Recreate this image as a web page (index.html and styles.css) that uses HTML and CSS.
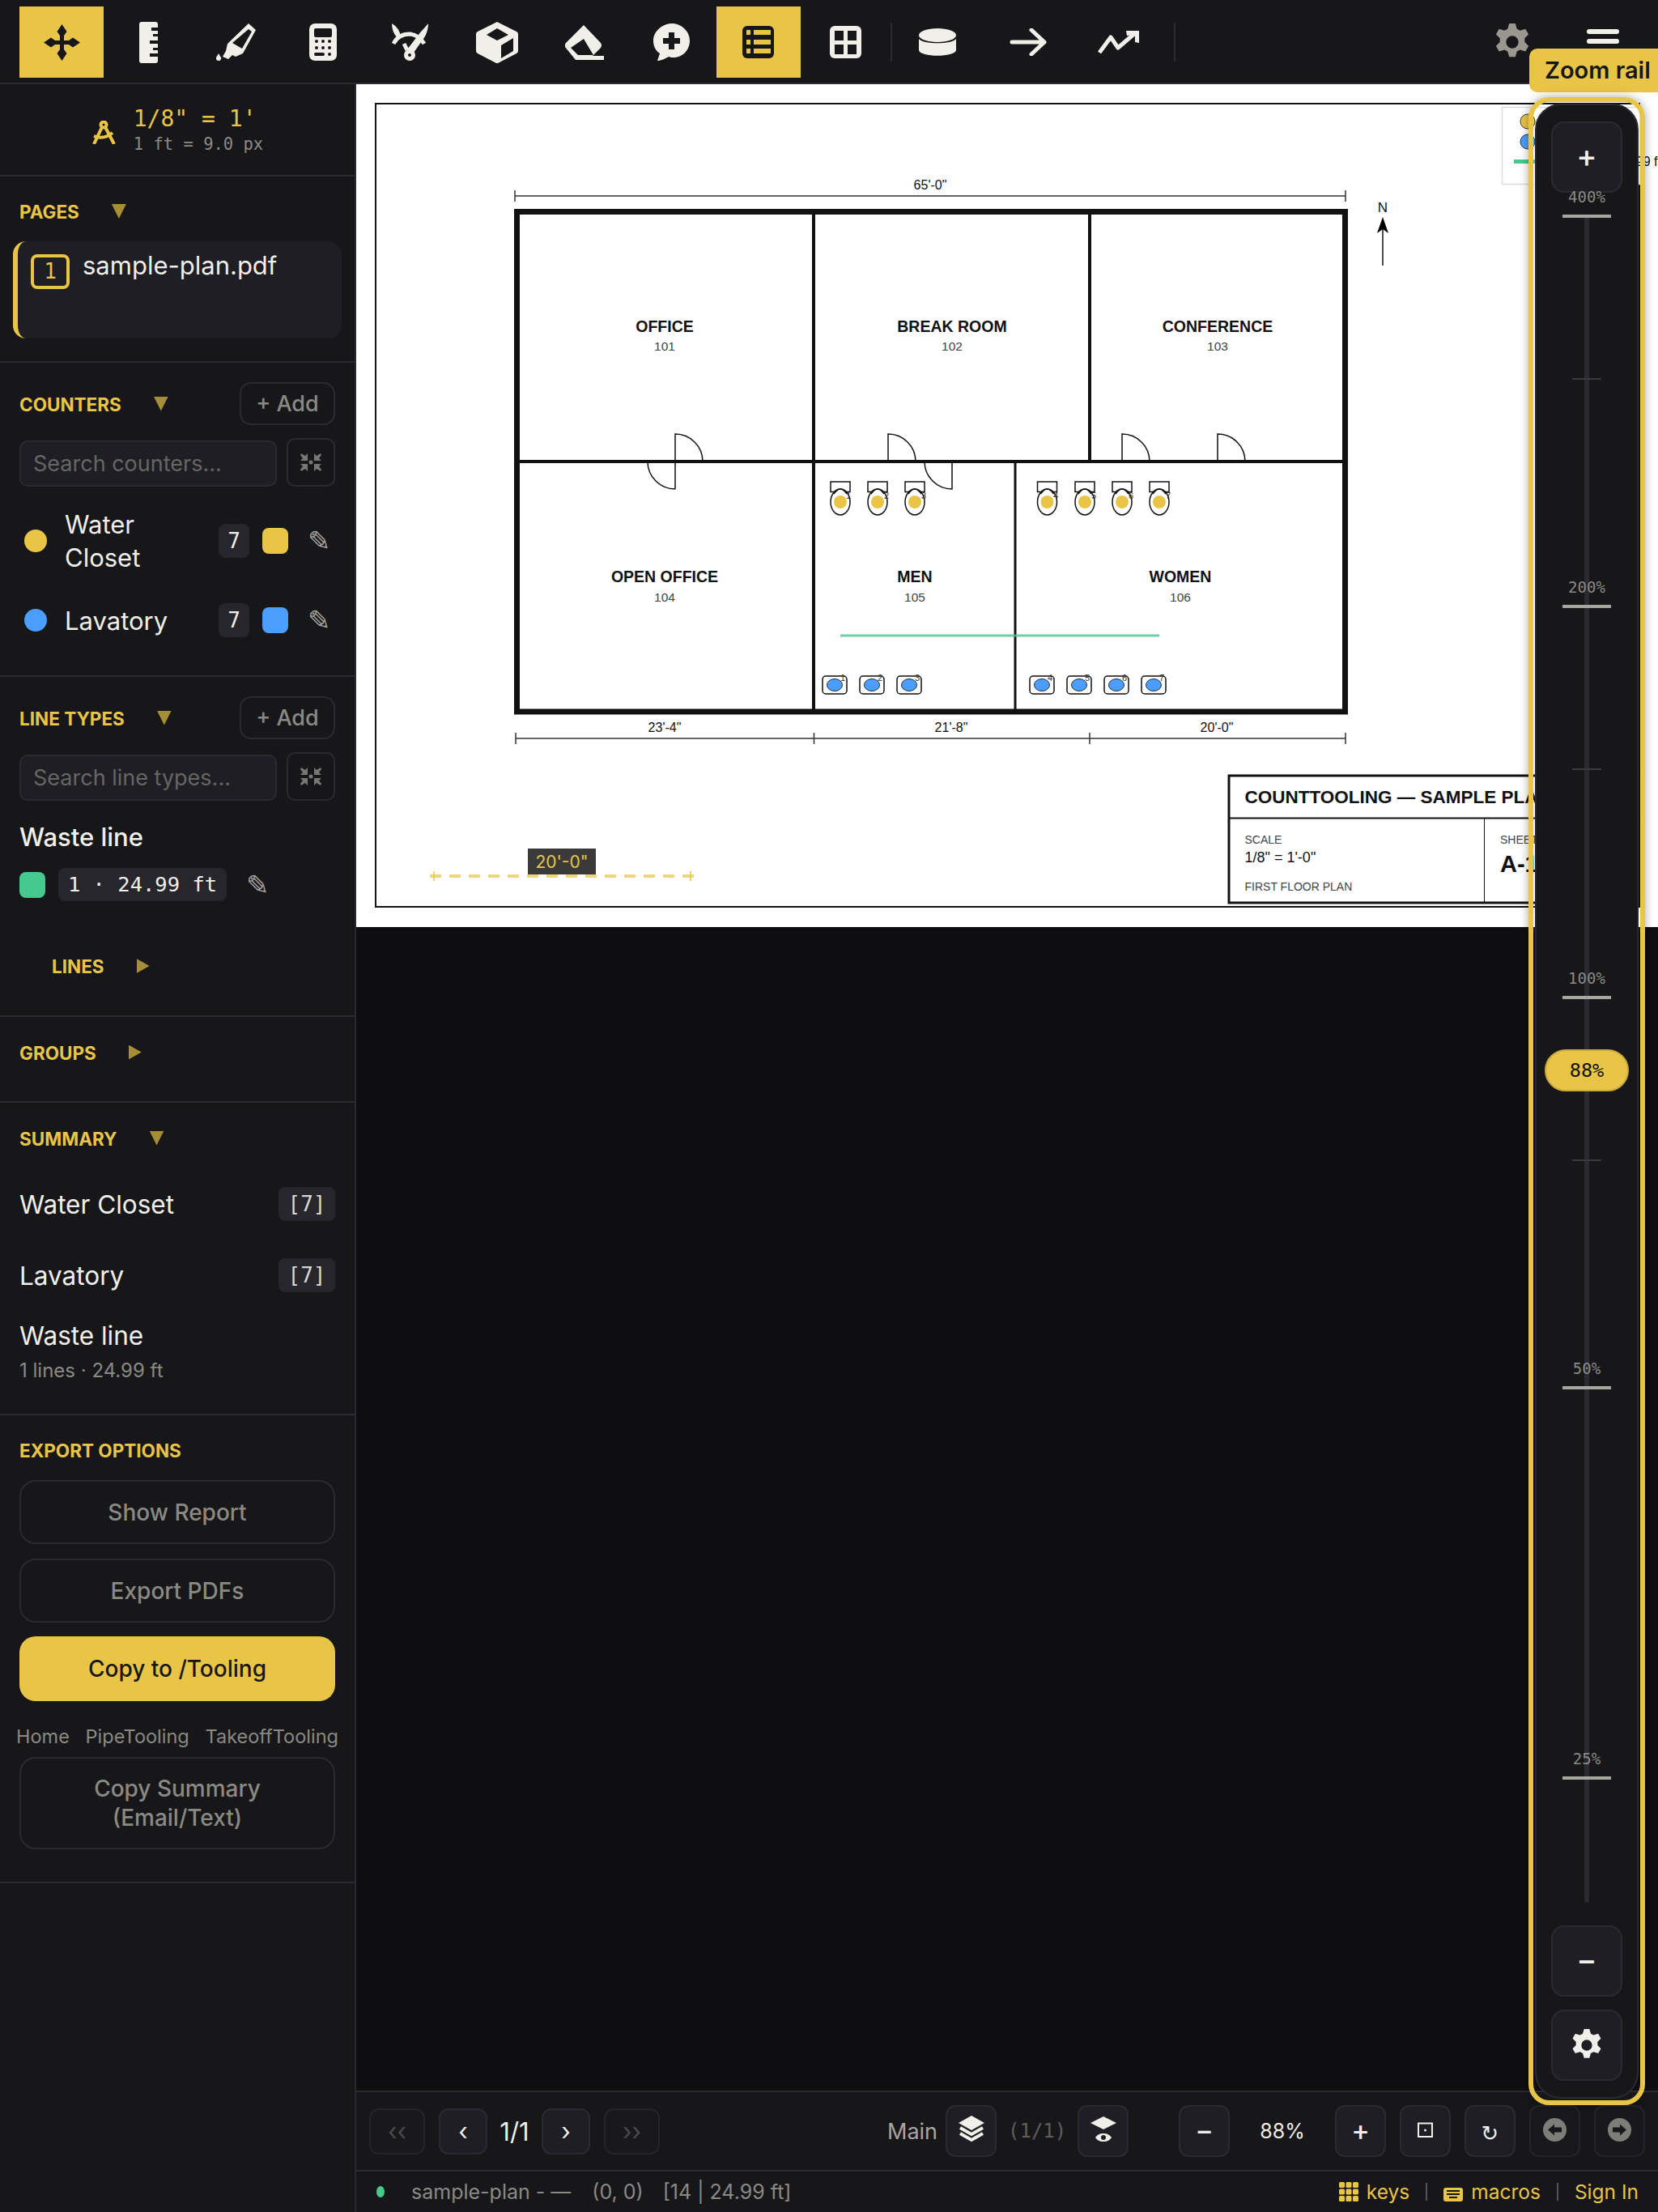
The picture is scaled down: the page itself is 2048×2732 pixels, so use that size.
FILE: index.html
```html
<!DOCTYPE html>
<html>
  <head>
    <meta charset="utf-8" />
    <title>CountTooling</title>
    <link rel="stylesheet" href="styles.css">
  </head>
  <body>
    <div id="app">
      <div class="topbar">
        <button class="tool active">
          <svg width="45" height="45" viewBox="0 0 45 45"><path d="M22.5 0l6 9-3.5 5v6h6l5-3.5 9 6-9 6-5-3.5h-6v6l3.5 5-6 9-6-9 3.5-5v-6h-6l-5 3.5-9-6 9-6 5 3.5h6v-6l-3.5-5z"/></svg>
        </button>
        <button class="tool">
          <svg width="23" height="51" viewBox="0 0 23 51"><rect width="23" height="51" rx="3"/><g class="cut"><rect x="15" y="7" width="8" height="4"/><rect x="17" y="15" width="6" height="3"/><rect x="13" y="23" width="10" height="4"/><rect x="17" y="32" width="6" height="3"/><rect x="13" y="39" width="10" height="4"/></g></svg>
        </button>
        <button class="tool">
          <svg width="49" height="47" viewBox="0 0 49 47"><path fill-rule="evenodd" d="M40 0l9 8-16 29-9 4-4-2-5 5-7-3 4-7 2-9zM40 7L20 24l12 7 12-21z"/><path d="M3 46a3 3 0 0 1-3-4l3-5 3 5a3 3 0 0 1-3 4z"/></svg>
        </button>
        <button class="tool">
          <svg width="34" height="46" viewBox="0 0 34 46"><rect width="34" height="46" rx="7"/><g class="cut"><rect x="6" y="6" width="22" height="11" rx="2"/><circle cx="9" cy="22" r="2"/><circle cx="17" cy="22" r="2"/><circle cx="25" cy="22" r="2"/><circle cx="9" cy="30" r="2"/><circle cx="17" cy="30" r="2"/><circle cx="25" cy="30" r="2"/><rect x="6" y="36" width="13" height="4" rx="2"/><circle cx="25" cy="38" r="2"/></g></svg>
        </button>
        <button class="tool">
          <svg width="45" height="46" viewBox="0 0 45 46"><circle class="stroke" cx="22" cy="39" r="4.500"/><path class="stroke" d="M2 25Q8 13 22 13Q33 14 40 25M19 33L15 25"/><path d="M0 0Q9 5 11 16L6 17Q0 10 0 0zM45 0Q45 8 41 16L27 36 19 32 36 10Q40 6 45 0z"/></svg>
        </button>
        <button class="tool">
          <svg width="52" height="51" viewBox="0 0 52 51"><path d="M26 0l24 12q2 1 2 3v21q0 2-2 3L27 51h-2L2 39q-2-1-2-3V15q0-2 2-3z"/><path class="cut" d="M26 8l14 8-14 7-13-7zM31 29l15-9v16l-15 9z"/></svg>
        </button>
        <button class="tool">
          <svg width="49" height="43" viewBox="0 0 49 43"><path fill-rule="evenodd" d="M24 0l21 22q2 3 0 6L35 38h14v5H14L1 27q-1-3 1-5zM24 17L8 28l9 9h19z"/></svg>
        </button>
        <button class="tool">
          <svg width="46" height="46" viewBox="0 0 46 46"><path d="M24 0c12 0 22 10 22 21s-8 21-20 21c-2 0-4 0-6-1-5 3-11 5-14 5l3-9C3 33 1 27 1 21 1 10 12 0 24 0z"/><path class="cut" d="M20 11h7v7h7v7h-7v7h-7v-7h-7v-7h7z"/></svg>
        </button>
        <button class="tool active">
          <svg width="39" height="40" viewBox="0 0 39 40"><rect width="39" height="40" rx="6"/><g class="slot"><rect x="5" y="5" width="5" height="6"/><rect x="14" y="5" width="21" height="6"/><rect x="5" y="17" width="5" height="6"/><rect x="14" y="17" width="21" height="6"/><rect x="5" y="28" width="5" height="6"/><rect x="14" y="28" width="21" height="6"/></g></svg>
        </button>
        <button class="tool">
          <svg width="39" height="40" viewBox="0 0 39 40"><rect width="39" height="40" rx="6"/><g class="cut"><rect x="6" y="6" width="11" height="12"/><rect x="22" y="6" width="11" height="12"/><rect x="6" y="23" width="11" height="12"/><rect x="22" y="23" width="11" height="12"/></g></svg>
        </button>
        <div class="sep"></div>
        <div class="toolgroup">
          <button class="tool">
            <svg width="46" height="34" viewBox="0 0 46 34"><ellipse cx="23" cy="8.500" rx="23" ry="8.500"/><path d="M0 13c5 7 41 7 46 0v14c-1 9-45 9-46 0z"/></svg>
          </button>
          <button class="tool">
            <svg width="46" height="34" viewBox="0 0 46 34"><path class="stroke round" d="M3 17h40M27 2l16 15-16 15"/></svg>
          </button>
          <button class="tool">
            <svg width="51" height="28" viewBox="0 0 51 28"><path class="stroke" d="M2 27L16 8l9 13L46 3"/><path d="M35 0h16v15l-5-1V5l-10 1z"/></svg>
          </button>
        </div>
        <div class="sep sep-end"></div>
        <div class="toolgroup toolgroup-end">
          <button class="tool dim">
            <svg width="46" height="48" viewBox="0 0 48 48"><use href="#gear"/></svg>
          </button>
          <button class="tool">
            <svg width="40" height="32" viewBox="0 0 40 32"><rect width="40" height="6" rx="3"/><rect y="12" width="40" height="6" rx="3"/><rect y="24" width="40" height="6" rx="3"/></svg>
          </button>
        </div>
      </div>

      <div class="main">
        <div class="sidebar">
          <div class="scalebox">
            <svg class="scale-icon" width="30" height="29" viewBox="0 0 30 29"><circle cx="15" cy="5" r="3.500"/><path d="M13 8L3 29M17 8L28 29M3 19Q15 24 26 15"/></svg>
            <div>
              <div class="scale-main">1/8" = 1'</div>
              <div class="scale-sub">1 ft = 9.0 px</div>
            </div>
          </div>

          <div class="sec sec-pages">
            <div class="sec-head"><span class="sec-title">PAGES</span><span class="caret"></span></div>
            <div class="page-item">
              <span class="page-badge">1</span>
              <span class="page-name">sample-plan.pdf</span>
            </div>
          </div>

          <div class="sec sec-counters">
            <div class="sec-head head-add">
              <span class="sec-title">COUNTERS</span><span class="caret"></span>
              <button class="add-btn">+ Add</button>
            </div>
            <div class="search-row">
              <input class="search" placeholder="Search counters..." />
              <button class="collapse-btn"><svg width="26" height="24" viewBox="0 0 26 24"><use href="#collapse"/></svg></button>
            </div>
            <div class="counter-row first">
              <span class="dot yellow"></span>
              <span class="counter-name">Water Closet</span>
              <span class="count-badge">7</span>
              <span class="swatch yellow"></span>
              <span class="pencil">✎</span>
            </div>
            <div class="counter-row second">
              <span class="dot blue"></span>
              <span class="counter-name">Lavatory</span>
              <span class="count-badge">7</span>
              <span class="swatch blue"></span>
              <span class="pencil">✎</span>
            </div>
          </div>

          <div class="sec sec-lines">
            <div class="sec-head head-add">
              <span class="sec-title">LINE TYPES</span><span class="caret"></span>
              <button class="add-btn">+ Add</button>
            </div>
            <div class="search-row">
              <input class="search" placeholder="Search line types..." />
              <button class="collapse-btn"><svg width="26" height="24" viewBox="0 0 26 24"><use href="#collapse"/></svg></button>
            </div>
            <div class="line-name">Waste line</div>
            <div class="line-row">
              <span class="swatch green"></span>
              <span class="line-badge">1 · 24.99 ft</span>
              <span class="pencil">✎</span>
            </div>
            <div class="sec-head sub-head"><span class="sec-title">LINES</span><span class="caret right"></span></div>
          </div>

          <div class="sec sec-groups">
            <div class="sec-head"><span class="sec-title">GROUPS</span><span class="caret right"></span></div>
          </div>

          <div class="sec sec-summary">
            <div class="sec-head"><span class="sec-title">SUMMARY</span><span class="caret"></span></div>
            <div class="sum-row sum-first"><span>Water Closet</span><span class="sum-badge">[7]</span></div>
            <div class="sum-row sum-second"><span>Lavatory</span><span class="sum-badge">[7]</span></div>
            <div class="sum-line">Waste line</div>
            <div class="sum-sub">1 lines · 24.99 ft</div>
          </div>

          <div class="sec sec-export">
            <div class="export-title">EXPORT OPTIONS</div>
            <button class="wide-btn report">Show Report</button>
            <button class="wide-btn pdfs">Export PDFs</button>
            <button class="wide-btn primary">Copy to /Tooling</button>
            <div class="links"><span>Home</span><span>PipeTooling</span><span>TakeoffTooling</span></div>
            <button class="wide-btn copy">Copy Summary<br />(Email/Text)</button>
          </div>
        </div>

        <div class="workspace">
          <div class="canvas">
            <svg class="plan" viewBox="440 104 1608 1041" width="1608" height="1041">
              <rect x="464" y="128" width="1561" height="992" class="sheet"/>

              <rect x="1855.500" y="132.500" width="170" height="95" class="legend"/>
              <circle cx="1887" cy="150" r="9" class="fill-yellow thin"/>
              <circle cx="1887" cy="175" r="9" class="fill-blue thin"/>
              <rect x="1870" y="197" width="40" height="5" class="fill-green"/>
              <text x="2052" y="205" text-anchor="end" class="t-legend">24.99 ft</text>

              <path class="dim-line" d="M636 242H1662M636 235v14M1662 235v14"/>
              <text x="1149" y="234" class="t-dim">65'-0"</text>

              <rect x="638.500" y="261.500" width="1023" height="617.500" class="wall"/>
              <path class="wall-in" d="M1005 262V879M1346 262V570M640 570H1660"/>
              <path class="wall-thin" d="M1254 570V879"/>

              <path class="door" d="M834 604V536A34 34 0 0 1 868 570M834 604A34 34 0 0 1 800 570"/>
              <path class="door" d="M1097 570V536A34 34 0 0 1 1131 570"/>
              <path class="door" d="M1176 570V604A34 34 0 0 1 1142 570"/>
              <path class="door" d="M1386 570V536A34 34 0 0 1 1420 570"/>
              <path class="door" d="M1504 570V536A34 34 0 0 1 1538 570"/>

              <text x="821" y="410" class="t-room">OFFICE</text>
              <text x="821" y="433" class="t-num">101</text>
              <text x="1176" y="410" class="t-room">BREAK ROOM</text>
              <text x="1176" y="433" class="t-num">102</text>
              <text x="1504" y="410" class="t-room">CONFERENCE</text>
              <text x="1504" y="433" class="t-num">103</text>
              <text x="821" y="719" class="t-room">OPEN OFFICE</text>
              <text x="821" y="743" class="t-num">104</text>
              <text x="1130" y="719" class="t-room">MEN</text>
              <text x="1130" y="743" class="t-num">105</text>
              <text x="1458" y="719" class="t-room">WOMEN</text>
              <text x="1458" y="743" class="t-num">106</text>

              <defs>
                <g id="wc">
                  <rect x="-12" y="595" width="24" height="12.500" class="fix"/>
                  <ellipse cx="0" cy="620" rx="12" ry="16" class="fix"/>
                  <path class="fix-top" d="M-8 610Q0 598 8 610"/>
                  <circle cx="0" cy="620" r="8" class="fill-yellow"/>
                </g>
                <g id="lav">
                  <rect x="-15" y="835" width="30" height="22" rx="4" class="fix"/>
                  <ellipse cx="0" cy="846" rx="9.500" ry="7.500" class="fill-blue thin"/>
                </g>
              </defs>
              <use href="#wc" x="1038"/><use href="#wc" x="1084"/><use href="#wc" x="1130"/>
              <use href="#wc" x="1293.500"/><use href="#wc" x="1340"/><use href="#wc" x="1386"/><use href="#wc" x="1432"/>
              <text x="1045" y="616" class="t-mark">1</text><text x="1092" y="616" class="t-mark">2</text><text x="1138" y="616" class="t-mark">3</text>
              <text x="1301" y="616" class="t-mark">4</text><text x="1348" y="616" class="t-mark">5</text><text x="1394" y="616" class="t-mark">6</text><text x="1440" y="616" class="t-mark">7</text>
              <use href="#lav" x="1031"/><use href="#lav" x="1077"/><use href="#lav" x="1123"/>
              <use href="#lav" x="1287"/><use href="#lav" x="1333"/><use href="#lav" x="1379"/><use href="#lav" x="1425"/>
              <text x="1038" y="841" class="t-mark">1</text><text x="1084" y="841" class="t-mark">2</text><text x="1130" y="841" class="t-mark">3</text>
              <text x="1294" y="841" class="t-mark">4</text><text x="1340" y="841" class="t-mark">5</text><text x="1386" y="841" class="t-mark">6</text><text x="1432" y="841" class="t-mark">7</text>

              <path class="run" d="M1038 785H1432"/>

              <path class="dim-line" d="M637 912H1662M637 905v14M1005.500 905v14M1346 905v14M1662 905v14"/>
              <text x="821" y="904" class="t-dim">23'-4"</text>
              <text x="1175" y="904" class="t-dim">21'-8"</text>
              <text x="1503" y="904" class="t-dim">20'-0"</text>

              <text x="1708" y="262" class="t-north">N</text>
              <path class="north" d="M1708 328V280"/>
              <path d="M1708 268l7 20-7-5-7 5z"/>

              <rect x="1518" y="958" width="507" height="157" class="tb"/>
              <path class="tb-line" d="M1518 1010.500H2025"/>
              <path class="tb-thin" d="M1833.500 1010V1115"/>
              <text x="1537.500" y="992" class="t-tb-title">COUNTTOOLING — SAMPLE PLAN</text>
              <text x="1537.500" y="1042" class="t-tb-small">SCALE</text>
              <text x="1537.500" y="1065" class="t-tb-val">1/8" = 1'-0"</text>
              <text x="1537.500" y="1100" class="t-tb-small">FIRST FLOOR PLAN</text>
              <text x="1853" y="1042" class="t-tb-small">SHEET</text>
              <text x="1853" y="1077" class="t-tb-sheet">A-1</text>

              <path class="measure" d="M531 1082H858"/>
              <path class="measure-end" d="M536 1076v12M853 1076v12"/>
              <rect x="652" y="1048" width="84" height="32" class="tag"/>
              <text x="694" y="1072" class="t-tag">20'-0"</text>
            </svg>
          </div>

          <div class="navbar">
            <button class="nav-btn wide off">‹‹</button>
            <button class="nav-btn narrow">‹</button>
            <span class="page-count">1/1</span>
            <button class="nav-btn narrow">›</button>
            <button class="nav-btn wide off">››</button>
            <span class="layer-name">Main</span>
            <button class="bar-btn">
              <svg width="32" height="34" viewBox="0 0 32 34"><path d="M16 0l16 9-16 9L0 9z"/><path class="stroke-thin" d="M2 15l14 8 14-8M2 22l14 8 14-8"/></svg>
            </button>
            <span class="layer-count">(1/1)</span>
            <button class="bar-btn">
              <svg width="32" height="32" viewBox="0 0 32 32"><path d="M16 0l16 8-16 8L0 8z"/><path d="M16 21c5 0 8 2 10 5-2 3-5 5-10 5s-8-2-10-5c2-3 5-5 10-5z"/><circle class="cut-btn" cx="16" cy="26" r="3"/></svg>
            </button>
            <button class="bar-btn zoom-out">−</button>
            <span class="zoom-value">88%</span>
            <button class="bar-btn">+</button>
            <button class="bar-btn">
              <svg width="19" height="19" viewBox="0 0 19 19"><path class="fit" d="M1 1.500H18V18H1z"/><circle cx="9.500" cy="10" r="1.500"/></svg>
            </button>
            <button class="bar-btn glyph">↻</button>
            <button class="bar-btn faded">
              <svg width="29" height="29" viewBox="0 0 29 29"><circle cx="14.500" cy="14.500" r="14.500"/><path class="cut-btn" d="M6 14.500l8-7v4h9v6h-9v4z"/></svg>
            </button>
            <button class="bar-btn faded">
              <svg width="29" height="29" viewBox="0 0 29 29"><circle cx="14.500" cy="14.500" r="14.500"/><path class="cut-btn" d="M23 14.500l-8-7v4H6v6h9v4z"/></svg>
            </button>
          </div>

          <div class="statusbar">
            <span class="status-dot"></span>
            <span class="status-file">sample-plan - —</span>
            <span class="status-pos">(0, 0)</span>
            <span class="status-count">[14 | 24.99 ft]</span>
            <div class="status-right">
              <svg width="24" height="24" viewBox="0 0 24 24"><rect width="7" height="7" rx="1.500"/><rect x="8.500" width="7" height="7" rx="1.500"/><rect x="17" width="7" height="7" rx="1.500"/><rect y="8.500" width="7" height="7" rx="1.500"/><rect x="8.500" y="8.500" width="7" height="7" rx="1.500"/><rect x="17" y="8.500" width="7" height="7" rx="1.500"/><rect y="17" width="7" height="7" rx="1.500"/><rect x="8.500" y="17" width="7" height="7" rx="1.500"/><rect x="17" y="17" width="7" height="7" rx="1.500"/></svg>
              <span class="status-link">keys</span>
              <span class="status-sep"></span>
              <svg class="kbd" width="24" height="24" viewBox="0 0 24 24"><rect y="7" width="24" height="17" rx="3"/><g class="cut-status"><rect x="4" y="10" width="16" height="2"/><rect x="4" y="14" width="16" height="2"/><rect x="7" y="18" width="10" height="2"/></g></svg>
              <span class="status-link">macros</span>
              <span class="status-sep"></span>
              <span class="status-link">Sign In</span>
            </div>
          </div>
        </div>
      </div>

      <div class="rail-label">Zoom rail</div>
      <div class="rail-outline">
        <div class="rail">
          <button class="rail-btn rail-text">+</button>
          <div class="rail-scale">
            <div class="rail-track"></div>
            <div class="tick major" style="top: 29px"><span>400%</span></div>
            <div class="tick minor" style="top: 229px"></div>
            <div class="tick major" style="top: 511px"><span>200%</span></div>
            <div class="tick minor" style="top: 711px"></div>
            <div class="tick major" style="top: 994px"><span>100%</span></div>
            <div class="tick minor" style="top: 1194px"></div>
            <div class="tick major" style="top: 1476px"><span>50%</span></div>
            <div class="tick major" style="top: 1958px"><span>25%</span></div>
            <div class="rail-pill" style="top: 1058px">88%</div>
          </div>
          <button class="rail-btn rail-text rail-minus">−</button>
          <button class="rail-btn">
            <svg width="40" height="42" viewBox="0 0 48 48"><use href="#gear"/></svg>
          </button>
        </div>
      </div>
    </div>

    <svg class="defs" width="0" height="0">
      <defs>
        <path id="gear" fill-rule="evenodd" d="M20 0h8l2 7 4 2 7-2 4 7-5 5v5l5 5-4 7-7-2-4 2-2 7h-8l-2-7-4-2-7 2-4-7 5-5v-5L3 14l4-7 7 2 4-2zM24 16a8 8 0 1 0 0 16 8 8 0 0 0 0-16z" stroke-linejoin="round"/>
        <g id="collapse">
          <circle cx="13" cy="12" r="2.500"/>
          <path d="M1 1l5 3 3-3v9H0l3-3-3-4zM25 1l-5 3-3-3v9h9l-3-3 3-4zM1 23l5-3 3 3v-9H0l3 3-3 4zM25 23l-5-3-3 3v-9h9l-3 3 3 4z"/>
        </g>
      </defs>
    </svg>
  </body>
</html>
```
FILE: styles.css
```css
* {
  box-sizing: border-box;
}

body {
  margin: 0;
  background: #0e0e10;
  font-family: "Inter", "Liberation Sans", sans-serif;
  color: #f0efea;
  overflow: hidden;
}

button {
  font-family: inherit;
  cursor: pointer;
}

svg {
  display: block;
}

#app {
  position: relative;
  width: 2048px;
  height: 2732px;
  display: flex;
  flex-direction: column;
  overflow: hidden;
}

.defs {
  position: absolute;
}

/* top bar */
.topbar {
  height: 104px;
  flex: none;
  display: flex;
  align-items: flex-start;
  gap: 3.6px;
  padding: 8px 16px 0 24px;
  background: #17171a;
  border-bottom: 2px solid #2a2a32;
}

.tool {
  width: 104px;
  height: 88px;
  flex: none;
  display: flex;
  align-items: center;
  justify-content: center;
  border: none;
  background: none;
  padding: 0;
  fill: #f0efea;
}

.tool .cut {
  fill: #17171a;
}

.tool.active {
  background: #e8c547;
  fill: #17171a;
}

.tool .slot {
  fill: #e8c547;
}

.tool.dim {
  fill: #9a978f;
}

.stroke {
  fill: none;
  stroke: #f0efea;
  stroke-width: 5;
  stroke-linejoin: round;
}

.stroke.round {
  stroke-linecap: round;
}

.sep {
  width: 2px;
  height: 48px;
  margin: 20px 0 0 0;
  background: #2a2a32;
  flex: none;
}

.sep-end {
  margin-left: 13px;
}

.toolgroup {
  display: flex;
  gap: 8px;
}

.toolgroup-end {
  margin-left: auto;
}

/* layout */
.main {
  flex: 1;
  min-height: 0;
  display: flex;
}

.sidebar {
  width: 440px;
  flex: none;
  background: #17171a;
  border-right: 2px solid #2a2a32;
}

.workspace {
  flex: 1;
  min-width: 0;
  display: flex;
  flex-direction: column;
}

.canvas {
  flex: 1;
  min-height: 0;
  background: #0e0e10;
}

/* sidebar */
.scalebox {
  height: 114px;
  display: flex;
  align-items: center;
  justify-content: center;
  gap: 22px;
  border-bottom: 2px solid #2a2a32;
}

.scale-icon {
  fill: none;
  stroke: #e8c547;
  stroke-width: 4;
  margin-top: 6px;
}

.scale-main {
  font: 28px/36px "DejaVu Sans Mono", monospace;
  color: #e8c547;
}

.scale-sub {
  font: 20.500px/26px "DejaVu Sans Mono", monospace;
  color: #8a8a85;
}

.sec {
  padding: 0 24px;
  border-bottom: 2px solid #2a2a32;
}

.sec-head {
  height: 30px;
  display: flex;
  align-items: center;
}

.sec-title {
  margin-top: 2px;
  font-size: 22.500px;
  font-weight: 700;
  line-height: 30px;
  color: #e8c547;
}

.caret {
  width: 18px;
  height: 18px;
  margin-left: 40px;
  background: #a58e34;
  clip-path: polygon(0 0, 100% 0, 50% 100%);
}

.caret.right {
  width: 16px;
  clip-path: polygon(0 0, 100% 50%, 0 100%);
}

.sec-pages {
  padding: 28px 16px 28px 16px;
}

.sec-pages .sec-head {
  padding-left: 8px;
}

.page-item {
  height: 120px;
  margin-top: 22px;
  padding: 16px 0 0 16px;
  display: flex;
  align-items: flex-start;
  gap: 16px;
  background: #1e1e24;
  border-left: 6px solid #e8c547;
  border-radius: 16px;
}

.page-badge {
  width: 48px;
  height: 43px;
  border: 4px solid #e8c547;
  border-radius: 8px;
  color: #e8c547;
  font: 26px/34px "DejaVu Sans Mono", monospace;
  text-align: center;
}

.page-name {
  font-size: 31px;
  line-height: 28px;
}

.head-add {
  height: 53px;
}

.add-btn {
  margin-left: auto;
  width: 118px;
  height: 53px;
  background: none;
  border: 2px solid #2a2a32;
  border-radius: 14px;
  color: #8a8a85;
  font-size: 27px;
  font-weight: 500;
  padding: 0;
}

.search-row {
  display: flex;
  align-items: flex-end;
  gap: 12px;
  margin-top: 16px;
}

.search {
  width: 318px;
  height: 57px;
  background: #1e1e24;
  border: 2px solid #2a2a32;
  border-radius: 10px;
  padding: 0 15px;
  font-family: inherit;
  font-size: 27px;
  color: #f0efea;
  outline: none;
}

.search::placeholder {
  color: #666663;
}

.collapse-btn {
  width: 60px;
  height: 60px;
  background: none;
  border: 2px solid #2a2a32;
  border-radius: 10px;
  padding: 0;
  display: flex;
  align-items: center;
  justify-content: center;
  fill: #777774;
}

.sec-counters {
  padding-top: 24px;
  padding-bottom: 47px;
}

.counter-row {
  display: flex;
  align-items: center;
  font-size: 31px;
  line-height: 41px;
}

.counter-row.first {
  margin-top: 26px;
}

.counter-row.second {
  margin-top: 36px;
}

.dot {
  width: 28px;
  height: 28px;
  margin-left: 6px;
  border-radius: 50%;
  flex: none;
}

.yellow {
  background: #e8c547;
}

.blue {
  background: #4a9eff;
}

.green {
  background: #45c98e;
}

.counter-name {
  width: 212px;
  padding: 0 70px 0 22px;
  flex: none;
}

.counter-row.second .counter-name {
  padding-right: 0;
  white-space: nowrap;
}

.count-badge {
  width: 38px;
  height: 42px;
  background: #26262c;
  border-radius: 8px;
  font: 26px/42px "DejaVu Sans Mono", monospace;
  text-align: center;
  flex: none;
}

.swatch {
  width: 32px;
  height: 32px;
  border-radius: 8px;
  flex: none;
}

.counter-row .swatch {
  margin-left: 16px;
}

.pencil {
  font-family: "DejaVu Sans", sans-serif;
  font-size: 34px;
  line-height: 32px;
  color: #a8a6a0;
}

.counter-row .pencil {
  margin-left: 24px;
}

.sec-lines {
  padding-top: 24px;
  padding-bottom: 46px;
}

.line-name {
  margin-top: 25px;
  font-size: 31px;
  line-height: 40px;
  font-weight: 500;
}

.line-row {
  display: flex;
  align-items: center;
  gap: 16px;
  margin-top: 18px;
}

.line-badge {
  height: 41px;
  width: 208px;
  background: #26262c;
  border-radius: 8px;
  font: 25.500px/41px "DejaVu Sans Mono", monospace;
  text-align: center;
  white-space: pre;
}

.line-row .pencil {
  margin-left: 8px;
}

.sub-head {
  margin-top: 65px;
  padding-left: 40px;
}

.sec-groups {
  padding-top: 28.500px;
  padding-bottom: 45.500px;
}

.sec-summary {
  padding-top: 28.500px;
  padding-bottom: 38px;
}

.sum-row {
  display: flex;
  justify-content: space-between;
  align-items: center;
  height: 42px;
  font-size: 31.500px;
}

.sum-first {
  margin-top: 45.500px;
}

.sum-second {
  margin-top: 46px;
}

.sum-badge {
  width: 70px;
  height: 42px;
  background: #26262c;
  border-radius: 8px;
  font: 26px/42px "DejaVu Sans Mono", monospace;
  text-align: center;
  color: #d8d6d0;
}

.sum-line {
  margin-top: 34px;
  font-size: 31.500px;
  line-height: 40px;
}

.sum-sub {
  margin-top: 8px;
  font-size: 24px;
  line-height: 30px;
  color: #8a8a85;
}

.sec-export {
  padding-top: 28.500px;
  padding-bottom: 40px;
}

.export-title {
  font-size: 22.500px;
  font-weight: 700;
  line-height: 30px;
  color: #e8c547;
}

.wide-btn {
  display: block;
  width: 100%;
  height: 79px;
  background: none;
  border: 2px solid #2a2a32;
  border-radius: 20px;
  color: #8a8a85;
  font-size: 28px;
  font-weight: 500;
  padding: 0;
}

.report {
  margin-top: 21.500px;
}

.pdfs {
  margin-top: 18px;
}

.primary {
  margin-top: 17px;
  height: 80px;
  background: #e8c547;
  border: none;
  color: #17171a;
}

.links {
  display: flex;
  justify-content: space-between;
  margin: 28.500px -4px 0;
  font-size: 23.500px;
  line-height: 30px;
  color: #8a8a85;
}

.copy {
  margin-top: 10px;
  height: 114px;
  line-height: 36px;
}

/* blueprint */
.plan {
  background: #fff;
}

.sheet {
  fill: none;
  stroke: #111;
  stroke-width: 2;
}

.legend {
  fill: #fff;
  stroke: #ddd;
  stroke-width: 1.500;
}

.fill-yellow {
  fill: #e8c547;
}

.fill-blue {
  fill: #4a9eff;
}

.fill-green {
  fill: #45c98e;
}

.thin {
  stroke: #333;
  stroke-width: 1;
}

.wall {
  fill: none;
  stroke: #111;
  stroke-width: 7;
}

.wall-in {
  fill: none;
  stroke: #111;
  stroke-width: 4;
}

.wall-thin {
  fill: none;
  stroke: #111;
  stroke-width: 3;
}

.door {
  fill: none;
  stroke: #111;
  stroke-width: 1.500;
}

.dim-line {
  fill: none;
  stroke: #333;
  stroke-width: 1.500;
}

.fix {
  fill: #fff;
  stroke: #111;
  stroke-width: 1.500;
}

.fix-top {
  fill: none;
  stroke: #111;
  stroke-width: 1.500;
}

.run {
  stroke: #45c98e;
  stroke-width: 3;
  opacity: 0.8;
}

.north {
  stroke: #111;
  stroke-width: 1.500;
}

.tb {
  fill: #fff;
  stroke: #111;
  stroke-width: 3;
}

.tb-line {
  stroke: #111;
  stroke-width: 2;
}

.tb-thin {
  stroke: #111;
  stroke-width: 1;
}

.measure {
  stroke: #e8c547;
  stroke-width: 4;
  stroke-dasharray: 14 10;
  opacity: 0.7;
}

.measure-end {
  stroke: #e8c547;
  stroke-width: 1.500;
}

.tag {
  fill: #3a3a3a;
}

.plan text {
  font-family: "Liberation Sans", sans-serif;
  fill: #111;
}

.plan .t-dim {
  font-size: 16px;
  text-anchor: middle;
}

.plan .t-room {
  font-size: 19.500px;
  font-weight: 700;
  text-anchor: middle;
}

.plan .t-num {
  font-size: 15.500px;
  text-anchor: middle;
  fill: #444;
}

.plan .t-mark {
  font-size: 11px;
  fill: #333;
}

.plan .t-legend {
  font-size: 16px;
}

.plan .t-north {
  font-size: 17px;
  text-anchor: middle;
}

.plan .t-tb-title {
  font-size: 22.500px;
  font-weight: 700;
}

.plan .t-tb-small {
  font-size: 14px;
  fill: #444;
}

.plan .t-tb-val {
  font-size: 18px;
}

.plan .t-tb-sheet {
  font-size: 29px;
  font-weight: 700;
}

.plan .t-tag {
  font-family: "Inter", sans-serif;
  font-size: 21px;
  text-anchor: middle;
  fill: #e8c547;
}

/* bottom bars */
.navbar {
  height: 98px;
  flex: none;
  display: flex;
  align-items: center;
  padding-left: 16px;
  background: #17171a;
  border-top: 2px solid #2a2a32;
}

.nav-btn {
  height: 57px;
  flex: none;
  background: #1e1e24;
  border: 2px solid #2a2a32;
  border-radius: 12px;
  color: #f0efea;
  font-size: 30px;
  line-height: 1;
  padding: 0;
}

.nav-btn.wide {
  width: 69px;
  margin-left: 17px;
}

.nav-btn.wide:first-child {
  margin-left: 0;
}

.nav-btn.narrow {
  width: 60px;
}

.nav-btn.wide + .nav-btn.narrow {
  margin-left: 17px;
}

.nav-btn.off {
  background: #19191d;
  border-color: #24242a;
  color: #4a4a4a;
}

.page-count {
  width: 67px;
  text-align: center;
  font-size: 31px;
}

.layer-name {
  margin-left: 281px;
  width: 60px;
  font-size: 27px;
  color: #a8a6a0;
  white-space: nowrap;
}

.bar-btn {
  width: 63px;
  height: 64px;
  flex: none;
  display: flex;
  align-items: center;
  justify-content: center;
  margin-left: 17px;
  padding: 0 0 4px;
  background: #1e1e24;
  border: 2px solid #2a2a32;
  border-radius: 12px;
  color: #f0efea;
  fill: #f0efea;
  font-size: 34px;
  font-weight: 500;
}

.layer-name + .bar-btn {
  margin-left: 12px;
}

.stroke-thin {
  fill: none;
  stroke: #f0efea;
  stroke-width: 4;
}

.cut-btn {
  fill: #1e1e24;
}

.fit {
  fill: none;
  stroke: #f0efea;
  stroke-width: 2;
}

.layer-count {
  width: 72px;
  margin: 0 -3px 0 14px;
  font: 24px "DejaVu Sans Mono", monospace;
  color: #5e5e5b;
}

.zoom-out {
  margin-left: 62px;
}

.zoom-value {
  width: 130px;
  margin-right: -17px;
  text-align: center;
  font-size: 25px;
}

.glyph {
  font-family: "DejaVu Sans", sans-serif;
  font-size: 26px;
  padding: 6px 0 0;
}

.faded {
  background: #19191d;
  border-color: #24242a;
  fill: #7d7d7a;
}

.faded .cut-btn {
  fill: #19191d;
}

.statusbar {
  height: 52px;
  flex: none;
  display: flex;
  align-items: center;
  padding: 0 24px 0 25px;
  background: #17171a;
  border-top: 2px solid #2a2a32;
  font-size: 25px;
  color: #8a8a85;
  white-space: nowrap;
}

.status-dot {
  width: 10px;
  height: 14px;
  border-radius: 50%;
  background: #45c98e;
  margin-right: 33px;
}

.status-pos {
  margin-left: 26px;
}

.status-count {
  margin-left: 24px;
}

.status-right {
  margin-left: auto;
  display: flex;
  align-items: center;
  gap: 10px;
  color: #e8c547;
  fill: #e8c547;
}

.status-link {
  font-size: 24.500px;
}

.status-sep {
  width: 2px;
  height: 22px;
  margin: 0 10px;
  background: #555;
}

.cut-status {
  fill: #17171a;
}

/* zoom rail, lies over the sheet */
.rail-label {
  position: absolute;
  top: 60px;
  right: 0;
  width: 159px;
  height: 54px;
  padding-left: 19px;
  background: #e8c547;
  border-radius: 10px 0 0 10px;
  color: #17171a;
  font-size: 29px;
  font-weight: 600;
  line-height: 54px;
  white-space: nowrap;
}

.rail-outline {
  position: absolute;
  top: 120px;
  left: 1888px;
  width: 144px;
  height: 2480px;
  padding: 2px;
  border: 6px solid #e8c547;
  border-radius: 26px;
  box-shadow: 0 0 12px rgba(0, 0, 0, 0.35);
}

.rail {
  height: 100%;
  display: flex;
  flex-direction: column;
  align-items: center;
  padding: 20px 0;
  background: #17171a;
  border: 2px solid #2a2a32;
  border-radius: 32px;
}

.rail-btn {
  width: 88px;
  height: 88px;
  flex: none;
  display: flex;
  align-items: center;
  justify-content: center;
  padding: 0;
  background: #1e1e24;
  border: 2px solid #2a2a32;
  border-radius: 16px;
  color: #f0efea;
  fill: #f0efea;
  font-size: 38px;
  font-weight: 500;
}

.rail-text {
  padding-bottom: 5px;
}

.rail-minus {
  margin-bottom: 16px;
}

.rail-scale {
  position: relative;
  flex: 1;
  width: 100%;
}

.rail-track {
  position: absolute;
  top: 29px;
  left: 50%;
  width: 6px;
  height: 2083px;
  margin-left: -3px;
  background: #2a2a32;
  border-radius: 3px;
}

.tick {
  position: absolute;
  left: 50%;
}

.tick.major {
  width: 60px;
  height: 4px;
  margin: -2px 0 0 -30px;
  background: #a8a6a0;
}

.tick.minor {
  width: 36px;
  height: 2px;
  margin-left: -18px;
  background: #3a3a42;
}

.tick span {
  position: absolute;
  bottom: 14px;
  left: 0;
  width: 100%;
  font: 19px/24px "DejaVu Sans Mono", monospace;
  color: #8a8a85;
  text-align: center;
}

.rail-pill {
  position: absolute;
  left: 50%;
  width: 104px;
  height: 52px;
  margin-left: -52px;
  background: #e8c547;
  border: 2px solid #c9a93c;
  border-radius: 26px;
  color: #111;
  font: 23.500px/48px "DejaVu Sans Mono", monospace;
  text-align: center;
}
```
